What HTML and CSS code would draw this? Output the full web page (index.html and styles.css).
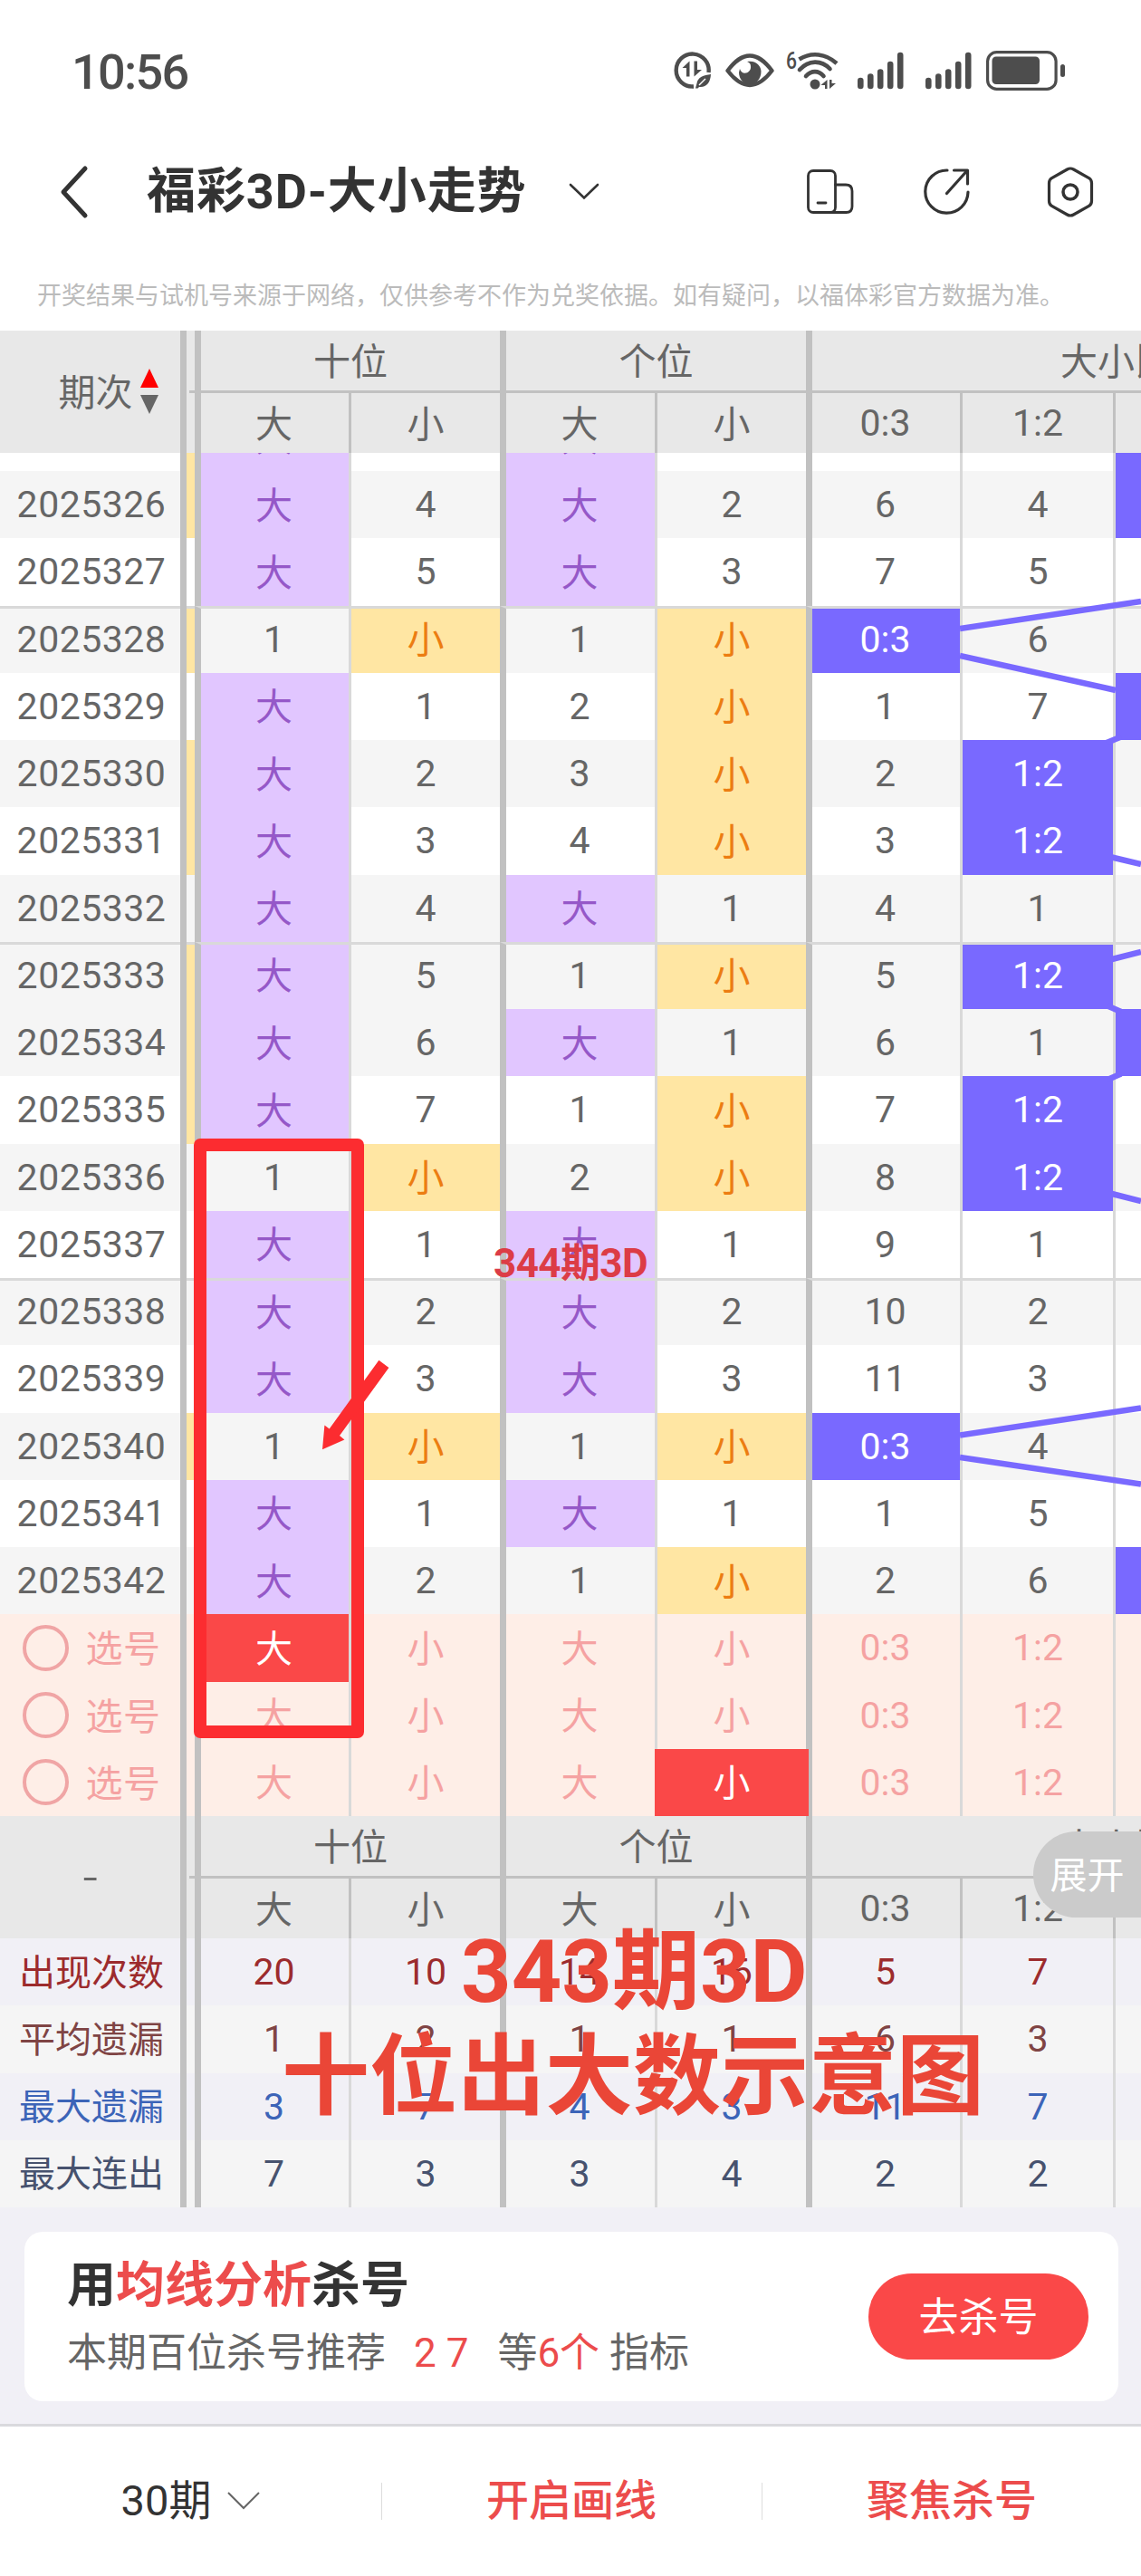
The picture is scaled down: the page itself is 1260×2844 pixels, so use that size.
FILE: index.html
```
<!DOCTYPE html>
<html lang="zh-CN">

<head>
  <meta charset="UTF-8">
  <meta name="viewport" content="width=device-width, initial-scale=1.0">
  <title>福彩3D-大小走势</title>
  <link rel="stylesheet" href="styles.css">
</head>

<body>
  <div class="status-bar">
    <div class="time">10:56</div>
    <div class="status-icons">
      <svg class="ic-data" width="42" height="42" viewBox="0 0 42 42">
        <path d="M38.5 23A18 18 0 1 0 22 38.5" fill="none" stroke="#4d4d4d" stroke-width="4.4" />
        <path d="M17.5 10.500V27.500H14V18H9.500ZM22.500 27.500V10.500H26V20H31Z" fill="#4d4d4d" />
        <path d="M41 25C33 26 26.500 28 25.500 35L24 40.500H26.500L28 39C36 40 40.500 34 41 25Z" fill="#4d4d4d" />
        <path d="M28 37L35 30" stroke="#fff" stroke-width="1.500" />
      </svg>
      <svg class="ic-eye" width="54" height="38" viewBox="0 0 54 38">
        <path d="M2.500 19C11 8 18 2.500 27 2.500S43 8 51.500 19C43 30 36 35 27 35S11 30 2.500 19Z" fill="none" stroke="#4d4d4d" stroke-width="4.400" stroke-linejoin="round" />
        <path d="M24 9C34 7 39.500 14 39.500 20C39.500 28 34 34 27 34S15 28 15 21L16 17C18 25 29 22 28 14C28 11 26 10 24 9Z" fill="#4d4d4d" />
      </svg>
      <svg class="ic-wifi" width="58" height="44" viewBox="0 0 58 44">
        <text x="0" y="20" font-size="26" font-weight="500" textLength="12" lengthAdjust="spacingAndGlyphs" fill="#4d4d4d">6</text>
        <g fill="none" stroke="#4d4d4d" stroke-width="4.600">
          <path d="M14.500 9.500C28 1 44 3 56 14" />
          <path d="M15 21C25 10 39 10 48.500 20" stroke-linecap="round" />
          <path d="M22 28C28 21.500 36 21.500 41.500 28" stroke-linecap="round" />
        </g>
        <circle cx="32" cy="37" r="5.500" fill="#4d4d4d" />
        <path d="M45.500 32V42H43V38H38.500ZM48 42V32H50.500V36H55Z" fill="#4d4d4d" />
      </svg>
      <svg class="ic-signal" width="51" height="42" viewBox="0 0 51 42">
        <path d="M3.300 32V38M14.300 27.500V38M25.200 22.500V38M36.200 14V38M47.200 4V38" stroke="#4d4d4d" stroke-width="6.600" stroke-linecap="round" />
      </svg>
      <svg class="ic-signal second" width="51" height="42" viewBox="0 0 51 42">
        <path d="M3.300 32V38M14.300 27.500V38M25.200 22.500V38M36.200 14V38M47.200 4V38" stroke="#4d4d4d" stroke-width="6.600" stroke-linecap="round" />
      </svg>
      <svg class="ic-battery" width="88" height="44" viewBox="0 0 88 44">
        <rect x="1.600" y="1.600" width="75.500" height="40.800" rx="10" fill="none" stroke="#4d4d4d" stroke-width="3.200" />
        <rect x="6.500" y="6.500" width="52.500" height="30.500" rx="4.500" fill="#4d4d4d" />
        <rect x="82" y="15" width="5" height="14" rx="2.500" fill="#4d4d4d" />
      </svg>
    </div>
  </div>

  <div class="nav">
    <svg class="back" width="34" height="60" viewBox="0 0 34 60">
      <path d="M29 4L5 30L29 56" fill="none" stroke="#333" stroke-width="5" stroke-linecap="round" stroke-linejoin="round" />
    </svg>
    <h1>福彩3D-大小走势</h1>
    <svg class="down" width="34" height="20" viewBox="0 0 34 20">
      <path d="M2 2L17 16.500L32 2" fill="none" stroke="#333" stroke-width="2.600" stroke-linecap="round" />
    </svg>
    <div class="nav-icons">
      <svg width="52" height="50" viewBox="0 0 52 50">
        <g fill="none" stroke="#333" stroke-width="2.800">
          <rect x="1.500" y="1.500" width="30" height="46" rx="5.500" />
          <path d="M31.500 17H43C48 17 50 19.500 50 24V41C50 45.500 48 47.500 43.500 47.500H26M12 37H21" stroke-linecap="round" />
        </g>
      </svg>
      <svg width="52" height="52" viewBox="0 0 52 52">
        <path d="M26 2A23.600 23.600 0 1 0 49 26M33.500 2H48.500V17M47 3.500L25.500 27.500" fill="none" stroke="#333" stroke-width="3.200" stroke-linecap="round" stroke-linejoin="round" />
      </svg>
      <svg width="52" height="56" viewBox="0 0 52 56">
        <path d="M22.500 3Q26 1 29.500 3L46.500 12.500Q49.500 14.500 49.500 18V38Q49.500 41.500 46.500 43.500L29.500 53Q26 55 22.500 53L5.500 43.500Q2.500 41.500 2.500 38V18Q2.500 14.500 5.500 12.500Z" fill="none" stroke="#333" stroke-width="3.200" />
        <circle cx="26" cy="28" r="8" fill="none" stroke="#333" stroke-width="3.500" />
      </svg>
    </div>
  </div>

  <p class="notice">开奖结果与试机号来源于网络，仅供参考不作为兑奖依据。如有疑问，以福体彩官方数据为准。</p>

  <div class="chart">
    <div class="chart-head">
      <div class="corner zh">期次
        <svg width="20" height="50" viewBox="0 0 20 50">
          <path d="M0 21L10 0L20 21Z" fill="#f00" />
          <path d="M0 29H20L10 50Z" fill="#666" />
        </svg>
      </div>
      <div class="gutter"></div>
      <div class="group zh">十位</div>
      <div class="group zh">个位</div>
      <div class="group wide zh"><span>大小比</span></div>
      <div class="sub thick zh">大</div>
      <div class="sub zh">小</div>
      <div class="sub thick zh">大</div>
      <div class="sub zh">小</div>
      <div class="sub thick">0:3</div>
      <div class="sub">1:2</div>
      <div class="sub"></div>
    </div>

    <div class="chart-body" id="chart-body">
      <!-- 走势行由脚本生成 -->
    </div>

    <div class="chart-head">
      <div class="corner"><span class="dash">-</span></div>
      <div class="gutter"></div>
      <div class="group zh">十位</div>
      <div class="group zh">个位</div>
      <div class="group wide zh"><span>大小比</span></div>
      <div class="sub thick zh">大</div>
      <div class="sub zh">小</div>
      <div class="sub thick zh">大</div>
      <div class="sub zh">小</div>
      <div class="sub thick">0:3</div>
      <div class="sub">1:2</div>
      <div class="sub"></div>
    </div>

    <div id="chart-stats"></div>

    <!-- 连线 -->
    <svg class="links" width="200" height="1505" viewBox="1060 500 200 1505">
      <g stroke="#7969ff" stroke-width="6.500" fill="none">
        <path d="M1060 694L1260 664M1060 724L1232 762" />
        <path d="M1222 820L1238 813.500M1228 946.500L1260 954" />
        <path d="M1228 1059L1260 1051M1223 1110.500L1238 1117M1223 1192L1238 1185.500" />
        <path d="M1228 1318L1260 1326" />
        <path d="M1060 1584.500L1260 1554.500M1060 1609L1260 1638.500" />
      </g>
    </svg>

    <button class="expand">展开</button>

    <!-- 标注 -->
    <div class="mark-box"></div>
    <svg class="mark-arrow" width="76" height="102" viewBox="355 1500 76 102">
      <path d="M418.400 1501.700L429.400 1510L375 1585L380.400 1589.500L356 1600.300L358.400 1573.500L363.700 1577.500Z" fill="#fc2c30" />
    </svg>
    <div class="mark-small">344期3D</div>
    <div class="mark-big"><span class="line-one">343期3D</span><span>十位出大数示意图</span></div>
  </div>

  <div class="promo">
    <div class="card">
      <div class="card-text">
        <h2>用<em>均线分析</em>杀号</h2>
        <p>本期百位杀号推荐<em class="nums">2 7</em>等<em>6个</em> 指标</p>
      </div>
      <button class="go">去杀号</button>
    </div>
  </div>

  <div class="tabs">
    <div class="tab period"><span>30期</span>
      <svg width="38" height="22" viewBox="0 0 38 22">
        <path d="M2 2L19 19L36 2" fill="none" stroke="#666" stroke-width="2" />
      </svg>
    </div>
    <div class="tab"><span>开启画线</span></div>
    <div class="tab"><span>聚焦杀号</span></div>
  </div>

  <script>
    // [期号, 左侧格, 十位大, 十位小, 个位大, 个位小, 0:3, 1:2, 右侧格]
    const rows = [
      ['2025325', 1, '大', '3', '大', '1', '5', '3', 1],
      ['2025326', 1, '大', '4', '大', '2', '6', '4', 1],
      ['2025327', 0, '大', '5', '大', '3', '7', '5', 0],
      ['2025328', 1, '1', '小', '1', '小', '0:3', '6', 0],
      ['2025329', 0, '大', '1', '2', '小', '1', '7', 1],
      ['2025330', 1, '大', '2', '3', '小', '2', '1:2', 0],
      ['2025331', 1, '大', '3', '4', '小', '3', '1:2', 0],
      ['2025332', 0, '大', '4', '大', '1', '4', '1', 0],
      ['2025333', 1, '大', '5', '1', '小', '5', '1:2', 0],
      ['2025334', 1, '大', '6', '大', '1', '6', '1', 1],
      ['2025335', 1, '大', '7', '1', '小', '7', '1:2', 0],
      ['2025336', 0, '1', '小', '2', '小', '8', '1:2', 0],
      ['2025337', 0, '大', '1', '大', '1', '9', '1', 0],
      ['2025338', 0, '大', '2', '大', '2', '10', '2', 0],
      ['2025339', 0, '大', '3', '大', '3', '11', '3', 0],
      ['2025340', 1, '1', '小', '1', '小', '0:3', '4', 0],
      ['2025341', 0, '大', '1', '大', '1', '1', '5', 0],
      ['2025342', 0, '大', '2', '1', '小', '2', '6', 1]
    ];
    const stats = [
      ['出现次数', '20', '10', '14', '16', '5', '7'],
      ['平均遗漏', '1', '2', '1', '1', '6', '3'],
      ['最大遗漏', '3', '7', '4', '3', '11', '7'],
      ['最大连出', '7', '3', '3', '4', '2', '2']
    ];
    const picked = ['0-0', '2-3'];

    function cell(text, cls) {
      const zh = /[大小出均]/.test(text) ? ' zh' : '';
      return `<div class="cell ${cls}${zh}">${text}</div>`;
    }

    function hitClass(value) {
      if (value === '大') return ' big';
      if (value === '小') return ' small';
      return value.includes(':') ? ' ratio' : '';
    }

    function renderRows() {
      let html = '';
      rows.forEach((r, i) => {
        const line = i % 5 === 3 ? ' line' : '';
        html += `<div class="row${i % 2 ? ' odd' : ''}${line}">`;
        html += cell(r[0], 'issue') + cell('', r[1] ? 'small' : '');
        for (let c = 2; c < 8; c++) {
          html += cell(r[c], (c % 2 ? 'thin' : 'thick') + hitClass(r[c]));
        }
        html += cell('', 'thin' + (r[8] ? ' ratio' : '')) + '</div>';
      });
      for (let i = 0; i < 3; i++) {
        html += '<div class="row pick">' + cell('<i class="radio"></i><span>选号</span>', 'issue') + cell('', '');
        ['大', '小', '大', '小', '0:3', '1:2', ''].forEach((t, c) => {
          const on = picked.includes(i + '-' + c) ? ' on' : '';
          html += cell(t, (c % 2 || c === 6 ? 'thin' : 'thick') + on);
        });
        html += '</div>';
      }
      document.getElementById('chart-body').innerHTML = html;
    }

    function renderStats() {
      document.getElementById('chart-stats').innerHTML = stats.map((s, i) =>
        `<div class="row stat stat-${i + 1}">` + cell(s[0], 'issue') + cell('', '') +
        s.slice(1).map((t, c) => cell(t, c % 2 ? 'thin' : 'thick')).join('') +
        cell('', 'thin') + '</div>'
      ).join('');
    }

    renderRows();
    renderStats();
  </script>
</body>

</html>
```
FILE: styles.css
```
* {
  box-sizing: border-box;
}

body {
  font-family: Roboto, "Noto Sans CJK SC", sans-serif;
  background: #fff;
  color: #666;
  margin: 0;
  width: 1260px;
  height: 2844px;
  overflow: hidden;
}

svg {
  display: block;
  flex: none;
}

h1,
h2,
p {
  margin: 0;
}

em {
  font-style: normal;
  color: #ec4c4c;
}

button {
  border: none;
  font-family: inherit;
  color: #fff;
  padding: 0;
}

/* 状态栏 */
.status-bar {
  height: 150px;
  display: flex;
  justify-content: space-between;
  padding: 0 83px 0 79px;
}

.time {
  font-size: 54px;
  font-weight: 500;
  line-height: 64px;
  padding-top: 48px;
  letter-spacing: -1.7px;
  color: #4d4d4d;
}

.status-icons {
  display: flex;
  align-items: center;
  height: 156px;
}

.ic-eye {
  margin-left: 15px;
}

.ic-wifi {
  margin-left: 13px;
}

.ic-signal {
  margin-left: 21px;
}

.ic-signal.second {
  margin-left: 24px;
}

.ic-battery {
  margin-left: 16px;
}

/* 标题栏 */
.nav {
  height: 122px;
  display: flex;
  align-items: center;
  padding: 2px 52px 0 65px;
}

.nav h1 {
  margin-left: 63px;
  font-size: 54px;
  line-height: 80px;
  letter-spacing: .9px;
  font-weight: 700;
  color: #333;
}

.nav .down {
  margin-left: 47px;
}

.nav-icons {
  margin-left: auto;
  display: flex;
  align-items: center;
}

.nav-icons svg + svg {
  margin-left: 77px;
}

.nav-icons svg:last-child {
  margin-left: 84px;
}

.notice {
  height: 93px;
  padding: 35px 0 0 41px;
  font-size: 27px;
  line-height: 40px;
  color: #bbb;
  white-space: nowrap;
}

/* 走势图 */
.chart {
  position: relative;
  font-size: 41px;
}

.chart-head,
.row {
  display: grid;
  grid-template-columns: 206px 9px 170px 167px 171px 167px 170px 169px 31px;
}

.chart-head {
  height: 135px;
  grid-template-rows: 69px 66px;
  background: #e8e8e8;
}

.chart-head > div {
  display: flex;
  align-items: center;
  justify-content: center;
}

.chart-head > .zh,
.cell.zh {
  padding-bottom: 5px;
}

.corner {
  grid-row: 1 / 3;
  border-right: 7px solid #c1c1c1;
}

.corner svg {
  margin: 4px -30px 0 8px;
}

.chart-head > .corner.zh {
  padding: 0 0 5px 10px;
}

.dash {
  transform: scaleX(1.4);
}

.gutter {
  grid-row: 1 / 3;
  background: linear-gradient(#c1c1c1, #c1c1c1) 3px 66px / 6px 3px no-repeat;
}

.group {
  grid-column: span 2;
  border-left: 7px solid #c1c1c1;
  border-bottom: 3px solid #c1c1c1;
}

.chart-head > .group.wide {
  grid-column: span 3;
  justify-content: flex-start;
  padding-left: 274px;
  overflow: hidden;
  white-space: nowrap;
}

.sub {
  border-left: 3px solid #c1c1c1;
}

.sub.thick {
  border-left-width: 7px;
}

.chart-body {
  height: 1505px;
  display: flex;
  flex-direction: column;
  justify-content: flex-end;
  overflow: hidden;
}

.row {
  height: 74.25px;
  flex: none;
  background: #fff;
}

.row.odd {
  background: #f5f5f5;
}

.row.line {
  background: linear-gradient(#d9d9d9, #d9d9d9) 0 0 / 100% 3px no-repeat #f5f5f5;
}

/* 每五期一条分隔线 */
.row.line .cell {
  background-clip: padding-box;
  border-top: 3px solid #d9d9d9;
  padding-bottom: 3px;
}

.row.line .cell.zh {
  padding-bottom: 8px;
}

.row.line .cell.issue {
  border-top: none;
  padding-bottom: 0;
}

.cell {
  display: flex;
  align-items: center;
  justify-content: center;
}

.cell.issue {
  border-right: 7px solid #c1c1c1;
  padding-left: 3px;
  letter-spacing: .5px;
}

.row .thick,
.chart-head .thick {
  padding-right: 2px;
}

.thick {
  border-left: 7px solid #c1c1c1;
}

.thin {
  border-left: 3px solid #d9d9d9;
}

.big {
  background: #e1c6ff;
  color: #9558c8;
}

.small {
  background: #ffe6a3;
  color: #ec7d12;
}

.ratio {
  background: #7969ff;
  color: #fff;
}

.row.pick {
  background: #feeee7;
  color: #f5a2a2;
}

.pick .issue span {
  padding-bottom: 4px;
}

.radio {
  width: 51px;
  height: 51px;
  border: 4px solid #f0a5a5;
  border-radius: 50%;
  margin-right: 19px;
}

.on {
  background: #fa4848;
  color: #fff;
}

.thin.on {
  position: relative;
  z-index: 1;
  border-left-color: #fa4848;
  box-shadow: 3px 0 #fa4848;
}

.row.stat {
  background: #f5f5f5;
}

.stat .issue {
  font-size: 40px;
  letter-spacing: 0;
}

.row.stat-1,
.row.stat-3 {
  background: #f1f0f6;
}

.stat-1 {
  color: #9c2b2d;
}

.stat-2 {
  color: #7f4444;
}

.stat-3 {
  color: #3c64b8;
}

.stat-4 {
  color: #47526e;
}

.links {
  position: absolute;
  right: 0;
  top: 135px;
}

.expand {
  position: absolute;
  right: 0;
  top: 1657px;
  width: 119px;
  height: 95px;
  padding-bottom: 5px;
  border-radius: 48px 0 0 48px;
  background: #cbcbcb;
  font-size: 41px;
}

/* 标注层 */
.mark-box {
  position: absolute;
  left: 214px;
  top: 892px;
  width: 188px;
  height: 662px;
  border: 14px solid #fc2c30;
  border-radius: 7px;
}

.mark-arrow {
  position: absolute;
  left: 355px;
  top: 1135px;
}

.mark-small {
  position: absolute;
  left: 545px;
  top: 1000px;
  font-size: 44px;
  font-weight: 700;
  letter-spacing: -.6px;
  line-height: 60px;
  color: #dc3c46;
  white-space: nowrap;
}

.mark-big {
  position: absolute;
  left: 311px;
  top: 1754px;
  display: flex;
  flex-direction: column;
  font-size: 97px;
  font-weight: 700;
  line-height: 116px;
  color: #ea4637;
  white-space: nowrap;
}

.line-one {
  padding-left: 198px;
}

/* 底部推荐 */
.promo {
  height: 242px;
  padding: 27px 25px 0 27px;
  background: #f1f0f6;
  border-bottom: 3px solid #d9d9dd;
}

.card {
  height: 187px;
  display: flex;
  align-items: center;
  justify-content: space-between;
  padding: 0 33px 0 47px;
  border-radius: 20px;
  background: #fff;
}

.card-text {
  padding-top: 6px;
}

.card h2 {
  font-size: 54px;
  font-weight: 700;
  line-height: 74px;
  color: #333;
}

.card p {
  font-size: 44px;
  line-height: 74px;
  white-space: pre;
}

.nums {
  margin: 0 32px 0 31px;
}

.go {
  width: 243px;
  height: 95px;
  padding-bottom: 5px;
  border-radius: 48px;
  background: #fa4848;
  font-size: 44px;
}

.tabs {
  display: grid;
  grid-template-columns: repeat(3, 1fr);
  padding-top: 42px;
}

.tab {
  height: 80px;
  display: flex;
  align-items: center;
  justify-content: center;
  font-size: 47px;
  font-weight: 500;
  color: #ec4c4c;
  background: linear-gradient(#ddd, #ddd) 1px 50% / 1px 41px no-repeat;
}

.tab span {
  padding: 0 0 9px 2px;
}

.tab.period {
  background: none;
  font-weight: 400;
  color: #333;
}

.period svg {
  margin-left: 17px;
}
```
